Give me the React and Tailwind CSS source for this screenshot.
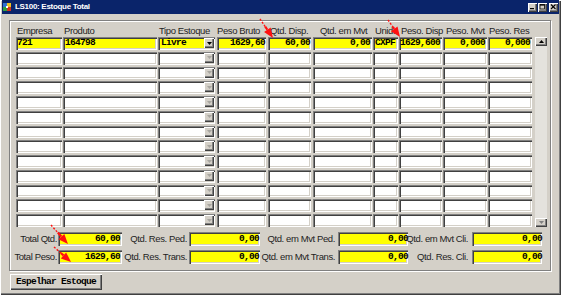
import React from 'react'

const SUNKEN =
  'shadow-[inset_1px_1px_0_#808080,inset_2px_2px_0_#404040,inset_-1px_-1px_0_#ffffff,inset_-2px_-2px_0_#d4d0c8]'
const RAISED = 'shadow-[inset_1px_1px_0_#ffffff,inset_-1px_-1px_0_#404040,inset_-2px_-2px_0_#808080]'
const SANS = "font-['Liberation_Sans',Arial,sans-serif] text-[9.5px] tracking-[-0.4px] text-[#1e1e1e]"
const MONO = "font-['Liberation_Mono','Courier_New',monospace] font-bold text-[9.5px] tracking-[-0.7px] text-black"

const COLS = [
  { label: 'Empresa', w: 'w-[46px]', mr: 'mr-[1px]', lp: 'pl-[1px]', val: '721', tp: 'pl-[1px]' },
  { label: 'Produto', w: 'w-[94px]', mr: 'mr-[1px]', lp: 'pl-[1px]', val: '164798', tp: 'pl-[2px]' },
  { label: 'Tipo Estoque', w: 'w-[57px]', mr: 'mr-[2px]', lp: 'pl-[1px]', val: 'Livre', tp: 'pl-[3px]', drop: true },
  { label: 'Peso Bruto', w: 'w-[49px]', mr: 'mr-[2px]', lp: 'pl-0', val: '1629,60', tp: 'justify-end pr-[1px]' },
  { label: 'Qtd. Disp.', w: 'w-[43px]', mr: 'mr-[2px]', lp: 'pl-[2px]', val: '60,00', tp: 'justify-end pr-[1px]' },
  { label: 'Qtd. em Mvt', w: 'w-[59px]', mr: 'mr-[1px]', lp: 'pl-[7px]', val: '0,00', tp: 'justify-end pr-[2px]' },
  { label: 'Unid.', w: 'w-[25px]', mr: 'mr-[1px]', lp: 'pl-[2px]', val: 'CXPF', tp: 'pl-[2px]' },
  { label: 'Peso. Disp', w: 'w-[43px]', mr: 'mr-[1px]', lp: 'pl-[2px]', val: '1629,600', tp: 'pl-[1px]' },
  { label: 'Peso. Mvt', w: 'w-[44px]', mr: 'mr-[1px]', lp: 'pl-[3px]', val: '0,000', tp: 'justify-end pr-[2px]' },
  { label: 'Peso. Res', w: 'w-[44px]', mr: 'mr-[3px]', lp: 'pl-[1px]', val: '0,000', tp: 'justify-end pr-[2px]' },
]

const ROWS = Array.from({ length: 13 }, (_, i) => i)

const FOOTER = [
  [
    { label: 'Total Qtd.', lw: 'w-[48px] pr-[1px]', fw: 'w-[64px] pr-[2px]', val: '60,00' },
    { label: 'Qtd. Res. Ped.', lw: 'w-[67px] pr-[2px]', fw: 'w-[71px] pr-[1px]', val: '0,00' },
    { label: 'Qtd. em Mvt Ped.', lw: 'w-[78px] pr-[3px]', fw: 'w-[70px] pr-0', val: '0,00' },
    { label: 'Qtd. em Mvt Cli.', lw: 'w-[64px] pr-[4px]', fw: 'w-[70px] pr-0', val: '0,00' },
  ],
  [
    { label: 'Total Peso.', lw: 'w-[48px] pr-[1px]', fw: 'w-[64px] pr-[2px]', val: '1629,60' },
    { label: 'Qtd. Res. Trans.', lw: 'w-[67px] pr-[2px]', fw: 'w-[71px] pr-[1px]', val: '0,00' },
    { label: 'Qtd. em Mvt Trans.', lw: 'w-[78px] pr-[3px]', fw: 'w-[70px] pr-0', val: '0,00' },
    { label: 'Qtd. Res. Cli.', lw: 'w-[64px] pr-[4px]', fw: 'w-[70px] pr-0', val: '0,00' },
  ],
]

function Tri({ down = true, color = '#000' }) {
  return (
    <svg width="5" height="3" viewBox="0 0 5 3" className="block">
      <polygon points={down ? '0,0 5,0 2.5,3' : '0,3 5,3 2.5,0'} fill={color} />
    </svg>
  )
}

function DropBtn({ active }) {
  return (
    <div
      className={`ml-auto mr-[1px] mt-[1px] flex h-[10px] w-[10px] shrink-0 items-center justify-center self-start bg-[#d4d0c8] ${RAISED}`}
    >
      <Tri color={active ? '#000' : '#a8a6a0'} />
    </div>
  )
}

function Cell({ col, filled }) {
  return (
    <div
      className={`flex h-full shrink-0 items-center overflow-hidden ${col.w} ${col.mr} ${SUNKEN} ${
        filled ? 'bg-[#ffff00]' : 'bg-white'
      } ${col.drop ? '' : col.tp}`}
    >
      {filled && (
        <span className={`${MONO} whitespace-nowrap leading-[12px] ${col.drop ? col.tp : ''}`}>{col.val}</span>
      )}
      {col.drop && <DropBtn active={filled} />}
    </div>
  )
}

function Arrow({ x1, y1, x2, y2 }) {
  const dx = x2 - x1
  const dy = y2 - y1
  const len = Math.hypot(dx, dy)
  const ux = dx / len
  const uy = dy / len
  const head = 10
  const half = 4
  const bx = x2 - ux * head
  const by = y2 - uy * head
  const mx = x1 + ux * len * 0.4
  const my = y1 + uy * len * 0.4
  const px = -uy * half
  const py = ux * half
  return (
    <g>
      <line x1={x1} y1={y1} x2={mx} y2={my} stroke="#ff1010" strokeWidth="1.4" strokeDasharray="2 1.6" />
      <line x1={mx} y1={my} x2={bx} y2={by} stroke="#ff1010" strokeWidth="2.2" />
      <polygon points={`${x2},${y2} ${bx + px},${by + py} ${bx - px},${by - py}`} fill="#ff1010" />
    </g>
  )
}

function AppIcon() {
  return (
    <svg width="8" height="8" viewBox="0 0 8 8" className="block">
      <rect x="0" y="0" width="8" height="8" fill="#ffffff" />
      <rect x="0" y="0" width="4" height="4" fill="#2f6fd0" />
      <rect x="4" y="0" width="4" height="4" fill="#f0c020" />
      <rect x="0" y="4" width="4" height="4" fill="#30a040" />
      <rect x="4" y="4" width="4" height="4" fill="#d03020" />
      <rect x="3" y="3" width="2" height="2" fill="#ffffff" />
    </svg>
  )
}

function CapBtn({ kind, extra = '' }) {
  return (
    <div className={`flex h-[9px] w-[9px] items-center justify-center bg-[#d4d0c8] ${RAISED} ${extra}`}>
      <svg width="7" height="6" viewBox="0 0 7 6" className="block">
        {kind === 'min' && <rect x="1" y="4" width="4" height="1.2" fill="#000" />}
        {kind === 'max' && (
          <g fill="none" stroke="#000">
            <rect x="1" y="0.5" width="4.5" height="4.5" strokeWidth="0.8" />
            <line x1="1" y1="1" x2="5.5" y2="1" strokeWidth="1.2" />
          </g>
        )}
        {kind === 'close' && (
          <g stroke="#000" strokeWidth="1.1">
            <line x1="1" y1="0.5" x2="5.5" y2="5" />
            <line x1="5.5" y1="0.5" x2="1" y2="5" />
          </g>
        )}
      </svg>
    </div>
  )
}

export default function App() {
  return (
    <div className="relative h-[295px] w-[561px] overflow-hidden bg-[#d4d0c8] shadow-[inset_1px_1px_0_#ffffff,inset_-1px_-1px_0_#404040,inset_-2px_-2px_0_#808080]">
      {/* title bar */}
      <div className="mx-[2px] flex h-[14px] items-center bg-[#0a246a]">
        <div className="ml-[1px]">
          <AppIcon />
        </div>
        <span className="ml-[4px] font-['Liberation_Sans',Arial,sans-serif] text-[8px] font-bold leading-[14px] tracking-[-0.3px] text-white">
          LS100: Estoque Total
        </span>
        <div className="ml-auto mr-[1px] flex items-center gap-[1px]">
          <CapBtn kind="min" />
          <CapBtn kind="max" />
          <CapBtn kind="close" extra="ml-[1px]" />
        </div>
      </div>

      {/* panel */}
      <div className="ml-[9px] mt-[6px] h-[251px] w-[542px] border border-[#808080] pt-[4px] shadow-[inset_1px_1px_0_#ffffff,1px_1px_0_#ffffff]">
        <div className="flex h-[12px] pl-[6px]">
          {COLS.map((c) => (
            <div key={c.label} className={`shrink-0 ${c.w} ${c.mr} ${c.lp}`}>
              <span className={`${SANS} block whitespace-nowrap leading-[12px]`}>{c.label}</span>
            </div>
          ))}
        </div>

        <div className="flex h-[190px] pl-[6px]">
          <div className="flex flex-col gap-[2px]">
            {ROWS.map((r) => (
              <div key={r} className="flex flex-1">
                {COLS.map((c) => (
                  <Cell key={c.label} col={c} filled={r === 0} />
                ))}
              </div>
            ))}
          </div>
          <div className="flex w-[12px] flex-col">
            <div className={`flex h-[9px] items-center justify-center bg-[#d4d0c8] ${RAISED}`}>
              <Tri down={false} />
            </div>
            <div className="flex-1 bg-[#e4e2dd]" />
            <div className={`flex h-[9px] items-center justify-center bg-[#d4d0c8] ${RAISED}`}>
              <Tri color="#808080" />
            </div>
          </div>
        </div>

        <div className="mt-[5px] flex flex-col gap-[4px]">
          {FOOTER.map((row, i) => (
            <div key={i} className="flex h-[14px]">
              {row.map((f) => (
                <React.Fragment key={f.label}>
                  <div className={`flex shrink-0 items-center justify-end ${f.lw}`}>
                    <span className={`${SANS} whitespace-nowrap leading-[14px]`}>{f.label}</span>
                  </div>
                  <div className={`flex h-full shrink-0 items-center justify-end bg-[#ffff00] ${SUNKEN} ${f.fw}`}>
                    <span className={`${MONO} leading-[12px]`}>{f.val}</span>
                  </div>
                </React.Fragment>
              ))}
            </div>
          ))}
        </div>
      </div>

      {/* button */}
      <button
        className={`ml-[10px] mt-[3px] flex h-[16px] w-[92px] items-center justify-center bg-[#d4d0c8] ${RAISED}`}
      >
        <span className={`${MONO} leading-[12px]`}>Espelhar Estoque</span>
      </button>

      {/* annotation arrows */}
      <svg className="pointer-events-none absolute left-0 top-0" width="561" height="295" viewBox="0 0 561 295">
        <Arrow x1={260} y1={19} x2={273} y2={38} />
        <Arrow x1={388} y1={20} x2={400} y2={37} />
        <Arrow x1={51} y1={225} x2={68} y2={244} />
        <Arrow x1={54} y1={247} x2={71} y2={262} />
      </svg>
    </div>
  )
}
